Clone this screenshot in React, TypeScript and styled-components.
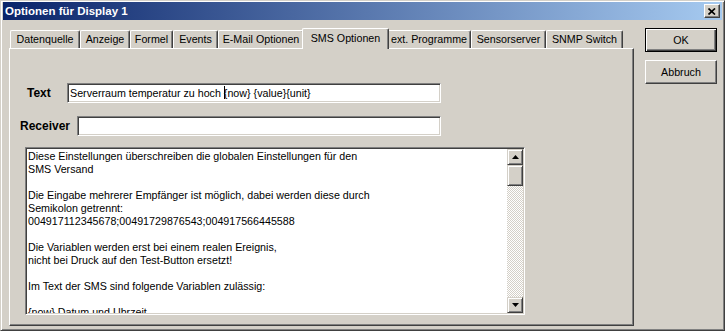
import React from "react";
import styled, { createGlobalStyle } from "styled-components";

const GlobalStyle = createGlobalStyle`
  html, body {
    margin: 0;
    padding: 0;
    background: #d4d0c8;
  }
  body {
    font-family: "Liberation Sans", Arial, sans-serif;
    font-size: 10.7px;
    color: #000;
  }
`;

const raised = `
  border: 1px solid;
  border-color: #fff #404040 #404040 #fff;
  box-shadow: inset -1px -1px #808080;
`;

const sunken = `
  border: 1px solid;
  border-color: #808080 #fff #fff #808080;
  box-shadow: inset 1px 1px #404040, inset -1px -1px #d4d0c8;
`;

const Window = styled.div`
  width: 725px;
  height: 331px;
  box-sizing: border-box;
  background: #d4d0c8;
  border: 1px solid;
  border-color: #d4d0c8 #404040 #404040 #d4d0c8;
  box-shadow: inset 1px 1px #fff, inset -1px -1px #808080;
  padding: 1px 2px 2px 2px;
  display: flex;
  flex-direction: column;
`;

const TitleBar = styled.div`
  height: 18px;
  flex: none;
  display: flex;
  align-items: center;
  justify-content: space-between;
  padding: 0 2px 0 2px;
  background: linear-gradient(to right, #0a246a, #a6caf0);
`;

const Title = styled.span`
  color: #fff;
  font-weight: bold;
  font-size: 11.5px;
`;

const CloseButton = styled.div`
  width: 16px;
  height: 14px;
  box-sizing: border-box;
  background: #d4d0c8;
  ${raised}
  display: flex;
  align-items: center;
  justify-content: center;
`;

const Body = styled.div`
  display: flex;
  padding: 8px 0 0 6px;
`;

const TabArea = styled.div`
  width: 625px;
  display: flex;
  flex-direction: column;
`;

const TabStrip = styled.div`
  display: flex;
  align-items: flex-start;
  height: 20px;
  padding-left: 1px;
`;

const Tab = styled.div<{ $w: number; $active?: boolean }>`
  position: relative;
  box-sizing: border-box;
  width: ${(p) => (p.$active ? p.$w + 4 : p.$w)}px;
  height: ${(p) => (p.$active ? 21 : 18)}px;
  margin: ${(p) => (p.$active ? "0 -2px 0 -2px" : "2px 0 0 0")};
  z-index: ${(p) => (p.$active ? 2 : 1)};
  background: #d4d0c8;
  border-top: 1px solid #fff;
  border-left: 1px solid #fff;
  border-right: 1px solid #404040;
  border-radius: 2px 2px 0 0;
  box-shadow: inset -1px 0 #808080;
  display: flex;
  justify-content: center;
  padding-top: ${(p) => (p.$active ? 3 : 2)}px;
  white-space: nowrap;
`;

const Panel = styled.div`
  position: relative;
  z-index: 1;
  height: 278px;
  box-sizing: border-box;
  ${raised}
  padding: 34px 0 0 0;
  display: flex;
  flex-direction: column;
`;

const FieldRow = styled.div<{ $indent: number; $gap: number }>`
  display: flex;
  align-items: center;
  width: 431px;
  box-sizing: border-box;
  padding-left: ${(p) => p.$indent}px;
  margin-bottom: ${(p) => p.$gap}px;
`;

const Label = styled.span`
  font-weight: bold;
  font-size: 12px;
`;

const TextField = styled.div<{ $w: number }>`
  margin-left: auto;
  width: ${(p) => p.$w}px;
  height: 20px;
  box-sizing: border-box;
  background: #fff;
  ${sunken}
  padding: 0 2px;
  line-height: 18px;
  white-space: nowrap;
  overflow: hidden;
`;

const Caret = styled.span`
  display: inline-block;
  width: 1px;
  height: 13px;
  margin-right: -1px;
  background: #000;
  vertical-align: -2px;
`;

const Memo = styled.div`
  margin-left: 15px;
  width: 500px;
  height: 168px;
  box-sizing: border-box;
  background: #fff;
  ${sunken}
  padding: 1px;
  display: flex;
`;

const MemoText = styled.div`
  flex: 1;
  padding: 1px 0 0 1px;
  line-height: 13px;
  white-space: pre;
  overflow: hidden;
`;

const ScrollBar = styled.div`
  width: 16px;
  display: flex;
  flex-direction: column;
  background: repeating-conic-gradient(#fff 0 25%, #d4d0c8 0 50%) 0 0 / 2px 2px;
`;

const ScrollButton = styled.div<{ $h?: number }>`
  width: 16px;
  height: ${(p) => p.$h ?? 16}px;
  box-sizing: border-box;
  background: #d4d0c8;
  border: 1px solid;
  border-color: #d4d0c8 #404040 #404040 #d4d0c8;
  box-shadow: inset 1px 1px #fff, inset -1px -1px #808080;
  display: flex;
  align-items: center;
  justify-content: center;
`;

const Track = styled.div`
  flex: 1;
`;

const ButtonColumn = styled.div`
  display: flex;
  flex-direction: column;
  gap: 8px;
  margin-left: 11px;
`;

const Button = styled.div<{ $default?: boolean }>`
  width: 72px;
  height: 24px;
  box-sizing: border-box;
  background: #d4d0c8;
  border: 1px solid;
  border-color: ${(p) => (p.$default ? "#000" : "#fff #404040 #404040 #fff")};
  box-shadow: ${(p) =>
    p.$default
      ? "inset 1px 1px #fff, inset -1px -1px #404040, inset -2px -2px #808080"
      : "inset -1px -1px #808080"};
  display: flex;
  align-items: center;
  justify-content: center;
`;

const tabs = [
  { label: "Datenquelle", w: 70 },
  { label: "Anzeige", w: 50 },
  { label: "Formel", w: 43 },
  { label: "Events", w: 45 },
  { label: "E-Mail Optionen", w: 86 },
  { label: "SMS Optionen", w: 83, active: true },
  { label: "ext. Programme", w: 84 },
  { label: "Sensorserver", w: 75 },
  { label: "SNMP Switch", w: 77 },
];

const memoLines = [
  "Diese Einstellungen überschreiben die globalen Einstellungen für den",
  "SMS Versand",
  "",
  "Die Eingabe mehrerer Empfänger ist möglich, dabei werden diese durch",
  "Semikolon getrennt:",
  "004917112345678;00491729876543;004917566445588",
  "",
  "Die Variablen werden erst bei einem realen Ereignis,",
  "nicht bei Druck auf den Test-Button ersetzt!",
  "",
  "Im Text der SMS sind folgende Variablen zulässig:",
  "",
  "{now} Datum und Uhrzeit",
];

const Arrow = ({ up }: { up?: boolean }) => (
  <svg width="7" height="4" viewBox="0 0 7 4">
    <polygon points={up ? "3.5,0 7,4 0,4" : "0,0 7,0 3.5,4"} fill="#000" />
  </svg>
);

export default function App() {
  return (
    <>
      <GlobalStyle />
      <Window>
        <TitleBar>
          <Title>Optionen für Display 1</Title>
          <CloseButton>
            <svg width="8" height="7" viewBox="0 0 8 7">
              <path d="M0.5 0.5 L7 6.5 M7 0.5 L0.5 6.5" stroke="#000" strokeWidth="1.7" />
            </svg>
          </CloseButton>
        </TitleBar>
        <Body>
          <TabArea>
            <TabStrip>
              {tabs.map((t) => (
                <Tab key={t.label} $w={t.w} $active={t.active}>
                  {t.label}
                </Tab>
              ))}
            </TabStrip>
            <Panel>
              <FieldRow $indent={17} $gap={13}>
                <Label>Text</Label>
                <TextField $w={374}>
                  Serverraum temperatur zu hoch <Caret />
                  {"{now} {value}{unit}"}
                </TextField>
              </FieldRow>
              <FieldRow $indent={10} $gap={11}>
                <Label>Receiver</Label>
                <TextField $w={364} />
              </FieldRow>
              <Memo>
                <MemoText>{memoLines.join("\n")}</MemoText>
                <ScrollBar>
                  <ScrollButton>
                    <Arrow up />
                  </ScrollButton>
                  <ScrollButton $h={21} />
                  <Track />
                  <ScrollButton>
                    <Arrow />
                  </ScrollButton>
                </ScrollBar>
              </Memo>
            </Panel>
          </TabArea>
          <ButtonColumn>
            <Button $default>OK</Button>
            <Button>Abbruch</Button>
          </ButtonColumn>
        </Body>
      </Window>
    </>
  );
}
